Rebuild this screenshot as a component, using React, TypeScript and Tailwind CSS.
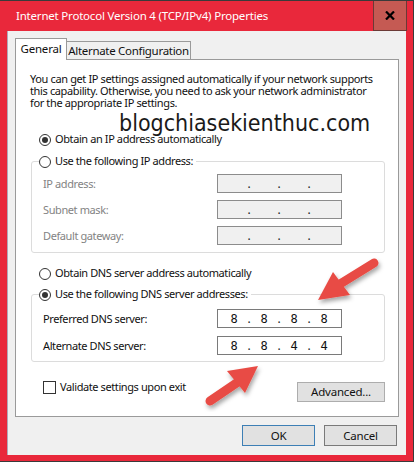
import React from "react";

const UI = { fontFamily: '"Noto Sans", "Open Sans", sans-serif' };

function Radio({ checked }: { checked?: boolean }) {
  return (
    <span className="w-[12px] h-[12px] rounded-full border border-[#333333] bg-white flex items-center justify-center shrink-0">
      {checked && <span className="w-[6px] h-[6px] rounded-full bg-[#333333]" />}
    </span>
  );
}

function IpBox({ values, disabled }: { values?: string[]; disabled?: boolean }) {
  const v = values ?? ["", "", "", ""];
  return (
    <div
      className={`w-[125px] h-[19px] border flex items-center pl-[9px] ${
        disabled ? "bg-[#f0f0f0] border-[#8c8c8c]" : "bg-white border-[#7a7a7a]"
      }`}
    >
      {v.map((d, i) => (
        <React.Fragment key={i}>
          <span
            className="w-[14px] text-center text-[12px] leading-[14px] tracking-normal text-[#111]"
            style={{ fontFamily: '"DejaVu Sans Mono", "Liberation Mono", monospace' }}
          >
            {d}
          </span>
          {i < 3 && (
            <span className="w-[16px] text-center text-[12px] leading-[14px] text-[#222]">.</span>
          )}
        </React.Fragment>
      ))}
    </div>
  );
}

function Row({
  label,
  disabled,
  values,
  className,
}: {
  label: string;
  disabled?: boolean;
  values?: string[];
  className?: string;
}) {
  return (
    <div className={`flex items-center h-[19px] pl-[11px] ${className ?? ""}`}>
      <span className={`w-[174px] leading-[14px] ${disabled ? "text-[#838383]" : "text-[#111]"}`}>{label}</span>
      <IpBox values={values} disabled={disabled} />
    </div>
  );
}

function Arrow({ d, head }: { d: string; head: string }) {
  return (
    <g filter="url(#shadow)">
      <path d={d} stroke="#e84c44" strokeWidth="9" strokeLinecap="round" fill="none" />
      <polygon points={head} fill="#e84c44" strokeLinejoin="round" />
    </g>
  );
}

export default function App() {
  return (
    <div
      className="relative w-[414px] h-[462px] bg-[#e9283b] border-t border-r border-b border-[#3a3a3a] flex flex-col overflow-hidden text-[11px] tracking-[-0.4px]"
      style={UI}
    >
      {/* Title bar */}
      <div className="h-[30px] flex items-stretch shrink-0">
        <div className="flex-1 flex items-center pl-[16px] text-white whitespace-nowrap text-[11.5px] tracking-[-0.2px]">
          Internet Protocol Version 4 (TCP/IPv4) Properties
        </div>
        <div className="w-[34px] bg-[#c55a53] border-l border-r border-b border-[#6b3a36] flex items-center justify-center mr-[6px]">
          <svg width="10" height="9" viewBox="0 0 10 9">
            <path d="M1 0.5 L9 8.5 M9 0.5 L1 8.5" stroke="#000" strokeWidth="2.2" />
          </svg>
        </div>
      </div>

      {/* Body */}
      <div className="mx-[7px] mb-[6px] flex-1 bg-[#f0f0f0] flex flex-col pt-[7px] px-[7px] border-l border-[#b0a8b8]">
        {/* Tabs */}
        <div className="flex items-end h-[21px] relative z-10">
          <div className="w-[52px] h-[22px] -mb-[1px] bg-white border border-b-0 border-[#9a9a9a] flex items-center justify-center text-[#111] pb-[2px] whitespace-nowrap text-[11.5px] tracking-[-0.2px]">
            General
          </div>
          <div className="w-[124px] h-[18px] border border-l-0 border-b-0 border-[#9a9a9a] bg-[#f0f0f0] flex items-center justify-center text-[#111] whitespace-nowrap text-[11.5px] tracking-[-0.3px]">
            Alternate Configuration
          </div>
        </div>

        {/* Panel */}
        <div className="relative h-[358px] bg-white border border-[#9a9a9a] flex flex-col">
          <p className="mt-[13px] ml-[14px] leading-[12px] text-[#111] whitespace-nowrap tracking-[-0.37px]">
            You can get IP settings assigned automatically if your network supports
            <br />
            this capability. Otherwise, you need to ask your network administrator
            <br />
            for the appropriate IP settings.
          </p>

          <div className="mt-[24px] ml-[23px] flex items-center gap-[4px] h-[13px] text-[#111]">
            <Radio checked />
            <span>Obtain an IP address automatically</span>
          </div>

          <div className="mt-[15px] ml-[15px] mr-[13px] border border-[#dcdcdc] rounded-[3px] flex flex-col pb-[7px]">
            <div className="-mt-[7px] ml-[7px] self-start flex items-center gap-[4px] h-[13px] bg-white pr-[3px] text-[#111]">
              <Radio />
              <span>Use the following IP address:</span>
            </div>
            <Row className="mt-[6px]" label="IP address:" disabled />
            <Row className="mt-[7px]" label="Subnet mask:" disabled />
            <Row className="mt-[7px]" label="Default gateway:" disabled />
          </div>

          <div className="mt-[14px] ml-[23px] flex items-center gap-[4px] h-[13px] text-[#111]">
            <Radio />
            <span>Obtain DNS server address automatically</span>
          </div>

          <div className="mt-[14px] ml-[15px] mr-[13px] border border-[#dcdcdc] rounded-[3px] flex flex-col pb-[6px]">
            <div className="-mt-[7px] ml-[7px] self-start flex items-center gap-[4px] h-[13px] bg-white pr-[3px] text-[#111]">
              <Radio checked />
              <span>Use the following DNS server addresses:</span>
            </div>
            <Row className="mt-[8px]" label="Preferred DNS server:" values={["8", "8", "8", "8"]} />
            <Row className="mt-[8px]" label="Alternate DNS server:" values={["8", "8", "4", "4"]} />
          </div>

          <div className="mt-[19px] ml-[27px] mr-[13px] flex items-start justify-between">
            <div className="flex items-center gap-[4px] h-[13px] text-[#111]">
              <span className="w-[13px] h-[13px] border border-[#333333] bg-white shrink-0" />
              <span>Validate settings upon exit</span>
            </div>
            <div className="mt-[1px] w-[88px] h-[20px] bg-[#e1e1e1] border border-[#adadad] flex items-center justify-center text-[#111] text-[11.5px] tracking-[-0.2px]">
              Advanced...
            </div>
          </div>

          {/* Watermark */}
          <div
            className="absolute left-[103px] top-[49px] text-[23px] leading-[28px] tracking-normal text-[#1a1a1a] whitespace-nowrap"
            style={{ fontFamily: '"DejaVu Sans Condensed", "DejaVu Sans", sans-serif' }}
          >
            blogchiasekienthuc.com
          </div>
        </div>

        {/* Dialog buttons */}
        <div className="mt-[8px] flex justify-end gap-[9px] mr-[2px] text-[11.5px] tracking-[-0.2px]">
          <div className="w-[73px] h-[21px] bg-[#e1e1e1] border border-[#3d7fb5] flex items-center justify-center text-[#111]">
            OK
          </div>
          <div className="w-[73px] h-[21px] bg-[#e1e1e1] border border-[#7a7a7a] flex items-center justify-center text-[#111]">
            Cancel
          </div>
        </div>
      </div>

      {/* Arrows overlay */}
      <svg className="absolute left-0 top-0 pointer-events-none" width="414" height="462" viewBox="0 0 414 462">
        <defs>
          <filter id="shadow" x="-30%" y="-30%" width="160%" height="160%">
            <feDropShadow dx="1.5" dy="3" stdDeviation="2" floodColor="#000" floodOpacity="0.35" />
          </filter>
        </defs>
        <Arrow d="M374 262 L340 283" head="318,299 333,271 350,294" />
        <Arrow d="M210 400 L238 381" head="258,365 227,370 245,392" />
      </svg>
    </div>
  );
}
